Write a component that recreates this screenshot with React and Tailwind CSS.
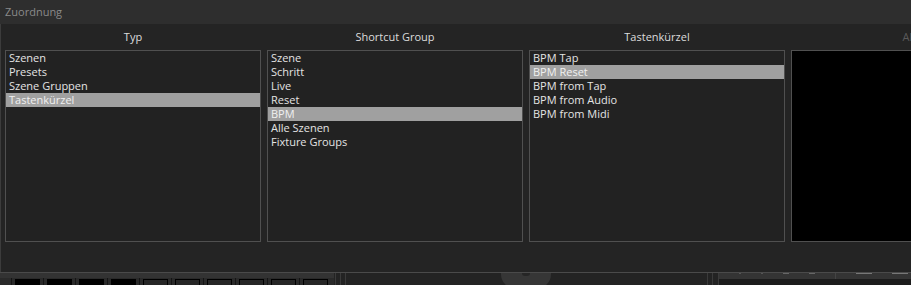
const FONT = { fontFamily: '"Segoe UI", "Open Sans", "Noto Sans", sans-serif' };

const COLUMNS = [
  {
    title: "Typ",
    items: ["Szenen", "Presets", "Szene Gruppen", "Tastenkürzel"],
    selected: 3,
  },
  {
    title: "Shortcut Group",
    items: ["Szene", "Schritt", "Live", "Reset", "BPM", "Alle Szenen", "Fixture Groups"],
    selected: 4,
  },
  {
    title: "Tastenkürzel",
    items: ["BPM Tap", "BPM Reset", "BPM from Tap", "BPM from Audio", "BPM from Midi"],
    selected: 1,
  },
];

function ListColumn({ title, items, selected }) {
  return (
    <div className="w-[256px] shrink-0 flex flex-col">
      <div className="h-[26px] flex items-center justify-center text-[11px] text-[#dcdcdc]">
        {title}
      </div>
      <div className="h-[192px] border border-[#505050] bg-[#222222] flex flex-col">
        {items.map((item, idx) => (
          <div
            key={item}
            className={`h-[14px] leading-[14px] px-[3px] text-[11px] ${
              idx === selected ? "bg-[#a0a0a0] text-[#f0f0f0]" : "text-[#e4e4e4]"
            }`}
          >
            {item}
          </div>
        ))}
      </div>
    </div>
  );
}

function BottomStrip() {
  const cells = [0, 1, 2, 3, 4, 5, 6, 7, 8, 9];
  return (
    <div className="h-[12px] flex bg-[#232323]">
      {/* Pad-Leiste links */}
      <div className="w-[334px] shrink-0 flex flex-col">
        <div className="h-[5px] bg-[#333333]" />
        <div className="flex-1 flex bg-[#2a2a2a]">
          <div className="w-[11px] shrink-0" />
          {cells.map((c) => (
            <div key={c} className="w-[32px] shrink-0 border-l border-[#151515] pt-px px-[3px]">
              <div
                className={`h-full border-t border-x border-black ${c < 4 ? "bg-black" : "bg-[#262626]"}`}
              />
            </div>
          ))}
        </div>
      </div>
      <div className="w-[12px] shrink-0 flex">
        <div className="w-px bg-[#3a3a3a] ml-px" />
        <div className="w-px bg-[#3a3a3a] ml-[4px]" />
        <div className="w-px bg-[#3a3a3a] ml-[4px]" />
      </div>
      {/* Mitte mit Drehregler */}
      <div className="w-[361px] shrink-0 overflow-hidden">
        <div className="ml-[155px] -mt-[14px] w-[50px] h-[30px] rounded-full bg-[#363636] flex justify-center">
          <div className="mt-[14px] w-[8px] h-[3px] rounded-b-full bg-[#262626]" />
        </div>
      </div>
      {/* Rechts */}
      <div className="flex-1 flex">
        <div className="w-px bg-[#3a3a3a]" />
        <div className="w-px bg-[#3a3a3a] ml-[4px]" />
        <div className="w-px bg-[#3a3a3a] ml-[5px]" />
        <div className="flex-1 flex flex-col">
          <div className="h-[6px] bg-[#343434] flex items-start gap-[20px] pl-[20px]">
            <div className="w-[2px] h-px bg-[#555]" />
            <div className="w-[2px] h-px bg-[#555]" />
            <div className="w-[6px] h-px bg-[#666]" />
            <div className="w-[6px] h-px bg-[#666]" />
            <div className="w-px h-full bg-[#444]" />
            <div className="w-[16px] h-px bg-[#777]" />
            <div className="w-[16px] h-px bg-[#777]" />
            <div className="w-[16px] h-px bg-[#777]" />
            <div className="w-[16px] h-px bg-[#777]" />
          </div>
          <div className="flex-1 bg-[#1c1c1c]" />
        </div>
      </div>
    </div>
  );
}

export default function App() {
  return (
    <div className="w-[911px] h-[285px] overflow-hidden bg-[#232323]" style={FONT}>
      {/* Titelleiste */}
      <div className="h-[24px] bg-[#2e2e2e] flex items-center pl-[5px] text-[11px] text-[#8a8a8a]">
        Zuordnung
      </div>

      {/* Inhalt */}
      <div className="h-[248px] border-l border-[#3c3c3c] bg-[#242424] flex gap-[6px] pl-[4px]">
        {COLUMNS.map((col) => (
          <ListColumn key={col.title} {...col} />
        ))}
        <div className="w-[256px] shrink-0 flex flex-col">
          <div className="h-[26px] flex items-center justify-center text-[11px] text-[#5a5a5a]">
            Aktion
          </div>
          <div className="h-[192px] border border-[#505050] bg-black" />
        </div>
      </div>

      <div className="h-px bg-[#4a4a4a]" />
      <BottomStrip />
    </div>
  );
}
